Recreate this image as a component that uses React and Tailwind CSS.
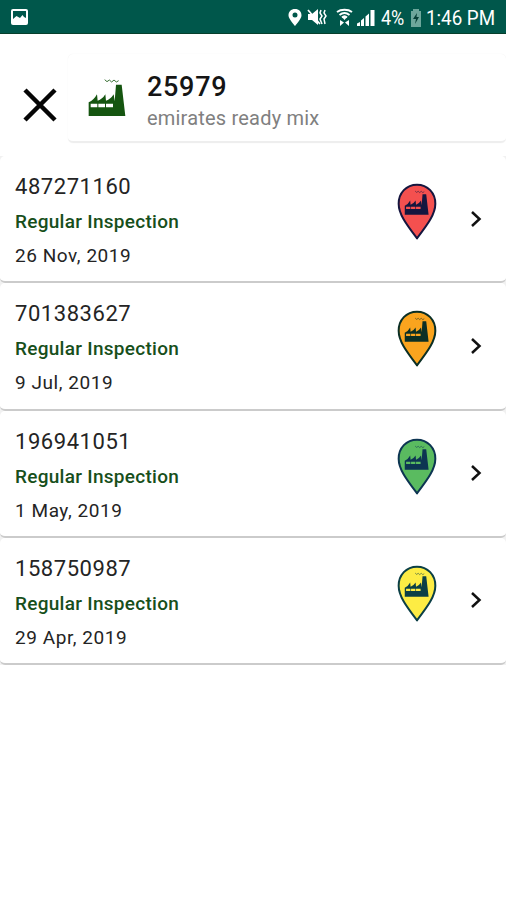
const inspections = [
  { id: '487271160', date: '26 Nov, 2019', fill: '#f4504f', ink: '#15163f' },
  { id: '701383627', date: '9 Jul, 2019', fill: '#faa41e', ink: '#0b2f25' },
  { id: '196941051', date: '1 May, 2019', fill: '#5abb60', ink: '#0d3552' },
  { id: '158750987', date: '29 Apr, 2019', fill: '#fdec44', ink: '#0b3f46' },
];

function FactoryShape({ color, gap }) {
  return (
    <>
      <path
        fill={color}
        d="M2 114V73Q18 66 27 49L29 68Q43 64 52 49L54 68Q68 64 77 49L80 70L84 20H101L112 114Z"
      />
      <path fill={gap} d="M8 77H28V88H8ZM31 77H51V88H31ZM54 77H75V88H54Z" />
      <path
        fill="none"
        stroke={color}
        strokeWidth="2.500"
        d="M50 5L57 11L64 6L71 12L78 6L85 12L92 8"
      />
    </>
  );
}

function Pin({ fill, ink }) {
  return (
    <svg className="h-[58px] w-[40px] shrink-0" viewBox="0 0 120 174">
      <path
        fill={fill}
        stroke={ink}
        strokeWidth="6"
        strokeLinejoin="round"
        d="M60 5C28 5 5 30 5 62C5 94 29 125 60 166C91 125 115 94 115 62C115 30 92 5 60 5Z"
      />
      <g transform="translate(22 21) scale(.65)">
        <FactoryShape color={ink} gap={fill} />
      </g>
    </svg>
  );
}

function StatusBar() {
  return (
    <header className="flex h-[34px] items-center border-b border-[#063f2c] bg-[#00574b] pl-[10px] pr-[10px] text-white">
      <svg className="h-[18px] w-[19px]" viewBox="0 0 19 18">
        <rect x="1" y="1" width="17" height="16" rx="2" fill="#fff" />
        <path fill="#00574b" d="M3 3H16V10L14 9L12.500 7L10 10L6.500 8L3 11Z" />
      </svg>
      <svg className="ml-auto h-[24px] w-[93px] shrink-0" viewBox="0 0 93 24" fill="#fff">
        <path fillRule="evenodd" d="M11 4C7 4 4.500 6.500 4.500 10.500C4.500 14 11 21 11 21S17.500 14 17.500 10.500C17.500 6.500 15 4 11 4ZM11 7.500A2.500 2.500 0 1 1 11 12.500A2.500 2.500 0 0 1 11 7.500Z" />
        <path d="M24 9H28L34 4V20L28 15H24Z" />
        <path d="M24 5L36 19" stroke="#fff" strokeWidth="1.700" />
        <path fill="none" stroke="#fff" strokeWidth="1.500" d="M37 5L36 8L38 11L36 14L38 19M41 5L40 8L42 11L40 14L41 19" />
        <path fill="none" stroke="#fff" strokeWidth="1.900" d="M53 7C57 4 64 4 68 7M55.500 10C58.500 7.500 62.500 7.500 65.500 10M58 12.500C59.500 11 61.500 11 63 12.500" />
        <path d="M58 12H63L60.500 15ZM56 15L60 17.500L56 21ZM65 15L61 17.500L65 21Z" />
        <path d="M73 21V18.500L76 17V21ZM77 21V15.500L80 13V21ZM81.500 21V11.500L85 8.500V21ZM86.500 21V5H90.500V21Z" />
      </svg>
      <span className="ml-[4px] mt-[2px] inline-block w-[28px] origin-left scale-x-[0.9] whitespace-nowrap text-[20px] leading-[28px]">4%</span>
      <svg className="ml-[1px] mt-[2px] h-[20px] w-[12px] shrink-0" viewBox="0 0 12 20">
        <path fill="#6da69b" d="M3 1H9V3H11V19H1V3H3Z" />
        <path fill="#063f36" d="M7 5L3 11H6L5 16L9 9H6.500Z" />
      </svg>
      <span className="ml-[4px] mt-[2px] inline-block w-[70px] origin-left scale-x-[0.938] whitespace-nowrap text-[20px] leading-[28px]">1:46 PM</span>
    </header>
  );
}

function InspectionCard({ item }) {
  return (
    <article className="flex h-[127.330px] rounded-[5px] border-b-2 border-[#cbcbcb] bg-white pl-[15px] pr-[23px]">
      <div className="flex-1 pt-[17px] text-[#242424]">
        <p className="h-[35px] text-[22px] leading-[27px] tracking-[0.550px]">{item.id}</p>
        <p className="h-[34px] text-[19px] font-medium leading-[27px] tracking-[0.280px] text-[#174f1b]">Regular Inspection</p>
        <p className="text-[19px] leading-[27px] tracking-[0.550px]">{item.date}</p>
      </div>
      <div className="mt-[27px] flex h-[58px] items-center gap-[32px]">
        <Pin fill={item.fill} ink={item.ink} />
        <svg className="mt-[13px] h-[18px] w-[14px]" viewBox="0 0 14 18" fill="none" stroke="#111" strokeWidth="2.500">
          <path d="M3 2L10.500 9L3 16" />
        </svg>
      </div>
    </article>
  );
}

export default function App() {
  return (
    <div className="h-[900px] w-[506px] overflow-hidden bg-white font-['Roboto',sans-serif]">
      <StatusBar />
      <section className="flex h-[122px] pt-[20px]">
        <button aria-label="Close" className="flex w-[68px] shrink-0 pl-[23px] pt-[34px]">
          <svg className="h-[34px] w-[34px]" viewBox="0 0 34 34" stroke="#050505" strokeWidth="4.500">
            <path d="M2 2L32 32M32 2L2 32" />
          </svg>
        </button>
        <div className="flex h-[89px] flex-1 rounded-[5px] border-b-2 border-[#eeeeee] pl-[20px] shadow-[0_0_1px_#e8e8e8]">
          <svg className="mt-[24px] h-[39px] w-[38px] shrink-0" viewBox="0 0 114 117">
            <FactoryShape color="#155510" gap="#fff" />
          </svg>
          <div className="pl-[21px] pt-[16px]">
            <h1 className="text-[27px] font-medium leading-[34px] tracking-[0.700px] text-[#151515]">25979</h1>
            <p className="text-[20px] leading-[29px] tracking-[0.200px] text-[#808080]">emirates ready mix</p>
          </div>
        </div>
      </section>
      <main className="bg-[#f1f1f1]">
        {inspections.map((item) => (
          <InspectionCard key={item.id} item={item} />
        ))}
      </main>
    </div>
  );
}
